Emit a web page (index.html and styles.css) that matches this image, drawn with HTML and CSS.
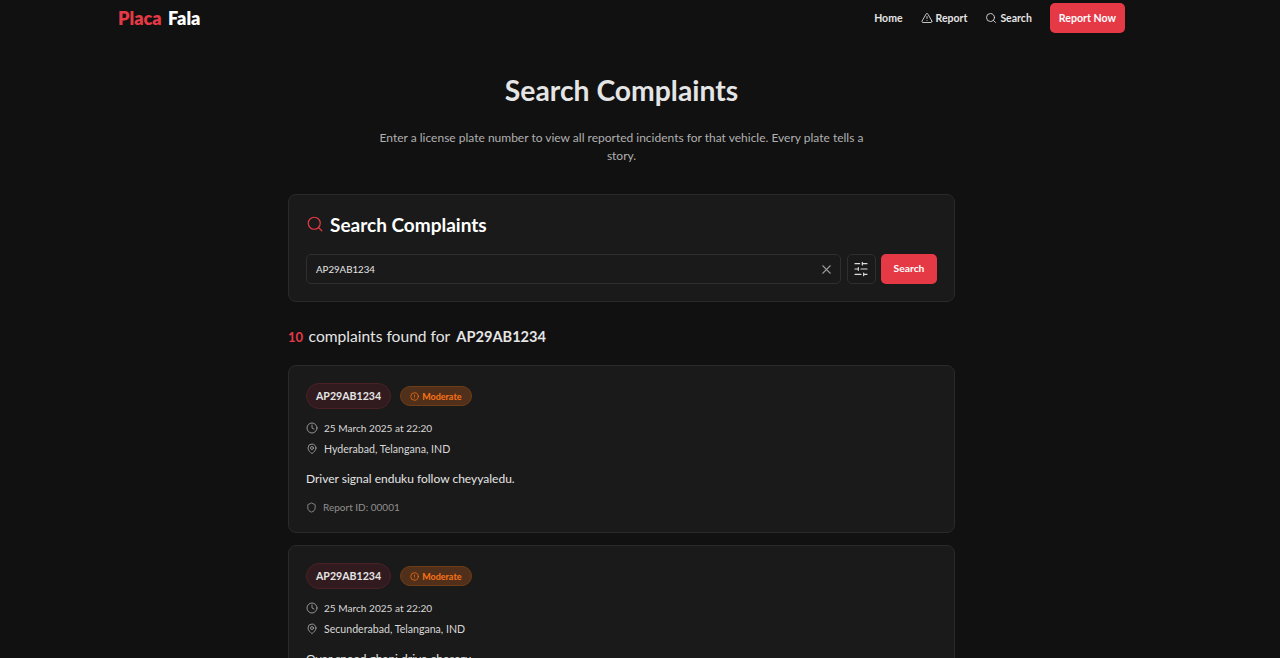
FILE: index.html
```html
<!DOCTYPE html>
<html lang="en">
<head>
<meta charset="utf-8">
<title>Placa Fala</title>
<link rel="stylesheet" href="styles.css">
</head>
<body>
<div class="page">
<header class="nav">
  <div class="logo"><span class="logo-red">Placa</span><span class="logo-white">Fala</span></div>
  <nav class="links">
    <a class="link">Home</a>
    <a class="link"><svg class="ic12" viewBox="0 0 24 24"><path d="M21.700 18 13.700 4a2 2 0 0 0-3.500 0l-8 14a2 2 0 0 0 1.800 3h16a2 2 0 0 0 1.700-3Z"/><path d="M12 9v4M12 17h.01"/></svg>Report</a>
    <a class="link"><svg class="ic12" viewBox="0 0 24 24"><circle cx="11" cy="11" r="8"/><path d="m21 21-4.300-4.300"/></svg>Search</a>
    <a class="cta">Report Now</a>
  </nav>
</header>
<main class="main">
  <h1 class="title">Search Complaints</h1>
  <p class="lead">Enter a license plate number to view all reported incidents for that vehicle. Every plate tells a story.</p>
  <section class="card search-card">
    <h2 class="search-title"><svg class="ic-big" viewBox="0 0 24 24"><circle cx="11" cy="11" r="8"/><path d="m21 21-4.300-4.300"/></svg>Search Complaints</h2>
    <div class="search-row">
      <div class="input"><span>AP29AB1234</span><svg class="ic-x" viewBox="0 0 24 24"><path d="M18 6 6 18M6 6l12 12"/></svg></div>
      <button class="filter"><svg class="ic-f" viewBox="0 0 24 24"><path d="M21 4h-7M10 4H3M21 12h-9M8 12H3M21 20h-5M12 20H3M14 2v4M8 10v4M16 18v4"/></svg></button>
      <button class="go">Search</button>
    </div>
  </section>
  <h3 class="count"><span class="num">10</span><span class="found">complaints found for</span><span class="plate-name">AP29AB1234</span></h3>
  <article class="card complaint first">
    <div class="tags"><span class="plate">AP29AB1234</span><span class="sev"><svg class="ic-sev" viewBox="0 0 24 24"><circle cx="12" cy="12" r="10"/><path d="M12 8v4M12 16h.01"/></svg>Moderate</span></div>
    <div class="meta when"><svg class="ic13" viewBox="0 0 24 24"><circle cx="12" cy="12" r="10"/><path d="M12 6v6l4 2"/></svg>25 March 2025 at 22:20</div>
    <div class="meta where"><svg class="ic13" viewBox="0 0 24 24"><path d="M20 10c0 5-5.500 9.200-7.400 10.800a1 1 0 0 1-1.200 0C9.500 19.200 4 15 4 10a8 8 0 0 1 16 0Z"/><circle cx="12" cy="10" r="3"/></svg>Hyderabad, Telangana, IND</div>
    <p class="desc">Driver signal enduku follow cheyyaledu.</p>
    <div class="rid"><svg class="ic-s" viewBox="0 0 24 24"><path d="M20 13c0 5-3.500 7.500-7.700 8.900a1 1 0 0 1-.6 0C7.500 20.500 4 18 4 13V6a1 1 0 0 1 1-1c2 0 4.500-1.200 6.200-2.700a1.200 1.200 0 0 1 1.600 0C14.500 3.800 17 5 19 5a1 1 0 0 1 1 1Z"/></svg>Report ID: 00001</div>
  </article>
  <article class="card complaint second">
    <div class="tags"><span class="plate">AP29AB1234</span><span class="sev"><svg class="ic-sev" viewBox="0 0 24 24"><circle cx="12" cy="12" r="10"/><path d="M12 8v4M12 16h.01"/></svg>Moderate</span></div>
    <div class="meta when"><svg class="ic13" viewBox="0 0 24 24"><circle cx="12" cy="12" r="10"/><path d="M12 6v6l4 2"/></svg>25 March 2025 at 22:20</div>
    <div class="meta where"><svg class="ic13" viewBox="0 0 24 24"><path d="M20 10c0 5-5.500 9.200-7.400 10.800a1 1 0 0 1-1.200 0C9.500 19.200 4 15 4 10a8 8 0 0 1 16 0Z"/><circle cx="12" cy="10" r="3"/></svg>Secunderabad, Telangana, IND</div>
    <p class="desc">Over speed ghani drive chesaru.</p>
  </article>
</main>
</div>
</body>
</html>
```
FILE: styles.css
```css
html, body { margin: 0; height: 100%; overflow: hidden; background: #111111; }
body { font-family: Lato, "Noto Sans", sans-serif; color: #e5e5e5; }
svg { fill: none; stroke: currentColor; stroke-width: 2; stroke-linecap: round; stroke-linejoin: round; flex: none; }
.page { width: 1243px; }
.nav { display: flex; justify-content: space-between; align-items: center; height: 36px; padding: 0 118px; box-sizing: border-box; }
.logo { display: flex; gap: 6.5px; font-size: 18px; font-weight: 800; }
.logo-red { color: #e63946; }
.logo-white { color: #fff; }
.links { display: flex; align-items: center; gap: 18px; }
.link { display: flex; align-items: center; gap: 3px; font-size: 10.500px; font-weight: 700; color: #e5e5e5; }
.ic12 { width: 12px; height: 12px; stroke-width: 1.7; }
.cta { background: #e63946; color: #fff; font-size: 10.600px; font-weight: 700; padding: 0 9px; height: 30px; display: flex; align-items: center; border-radius: 5px; }
.main { width: 667px; margin: 0 auto; }
.title { margin: 35px 0 0; text-align: center; font-size: 28.300px; line-height: 38px; font-weight: 700; color: #e5e5e5; }
.lead { margin: 20px auto 0; width: 500px; text-align: center; font-size: 12px; line-height: 18px; color: #b0b0b0; }
.card { background: #1a1a1a; border: 1px solid #2a2a2a; border-radius: 8px; box-sizing: border-box; }
.search-card { margin-top: 29px; height: 108px; padding: 15px 17px 0; }
.search-title { display: flex; align-items: center; gap: 6px; margin: 0; height: 28px; font-size: 19px; font-weight: 700; color: #fff; }
.ic-big { width: 18px; height: 18px; color: #e63946; stroke-width: 1.6; }
.search-row { display: flex; gap: 5.5px; margin-top: 16px; }
.input { flex: 1; height: 30px; display: flex; align-items: center; justify-content: space-between; padding: 0 6px 0 9px; border: 1px solid #2f2f2f; border-radius: 5px; font-size: 9.700px; color: #e5e5e5; box-sizing: border-box; }
.ic-x { width: 15px; height: 15px; color: #9a9a9a; stroke-width: 1.7; }
.filter { width: 29px; height: 30px; padding: 0; background: #1a1a1a; border: 1px solid #2f2f2f; border-radius: 5px; color: #dcdcdc; display: flex; align-items: center; justify-content: center; }
.ic-f { width: 16px; height: 16px; stroke-width: 1.8; }
.go { width: 56px; height: 30px; padding: 0 0 2px; border: 0; background: #e63946; color: #fff; font: 700 10.300px Lato, sans-serif; border-radius: 5px; }
.count { display: flex; align-items: baseline; gap: 5.5px; margin: 24px 0 0; font-size: 14px; line-height: 20px; font-weight: 400; color: #e5e5e5; }
.num { color: #e63946; font-weight: 700; font-size: 13px; }
.found { font-size: 15.600px; }
.plate-name { font-weight: 700; font-size: 14.600px; margin-left: .5px; }
.complaint { padding: 17px; }
.first { margin-top: 18px; height: 168px; }
.second { margin-top: 12px; height: 300px; }
.tags { display: flex; align-items: center; gap: 9px; }
.plate { height: 26px; display: flex; align-items: center; padding: 0 9px; border: 1px solid #4a2126; border-radius: 13px; background: #311b1f; font-size: 10.600px; font-weight: 700; color: #e5e5e5; box-sizing: border-box; }
.sev { height: 20px; display: flex; align-items: center; gap: 3px; padding: 0 9px; border: 1px solid #6e3d16; border-radius: 10px; background: #50301a; color: #f97316; font-size: 9px; font-weight: 700; box-sizing: border-box; }
.ic-sev { width: 9px; height: 9px; }
.meta { display: flex; align-items: center; gap: 6px; line-height: 14px; color: #d8d8d8; margin-top: 7px; }
.when { font-size: 10.100px; }
.where { font-size: 10.600px; }
.tags + .meta { margin-top: 12px; }
.ic13 { width: 12px; height: 12px; color: #a8a8a8; stroke-width: 1.7; }
.desc { margin: 14px 0 0; font-size: 12px; line-height: 18px; color: #e5e5e5; }
.rid { display: flex; align-items: center; gap: 6px; margin-top: 12px; font-size: 10px; line-height: 14px; color: #8f8f8f; }
.ic-s { width: 11px; height: 11px; }
```
